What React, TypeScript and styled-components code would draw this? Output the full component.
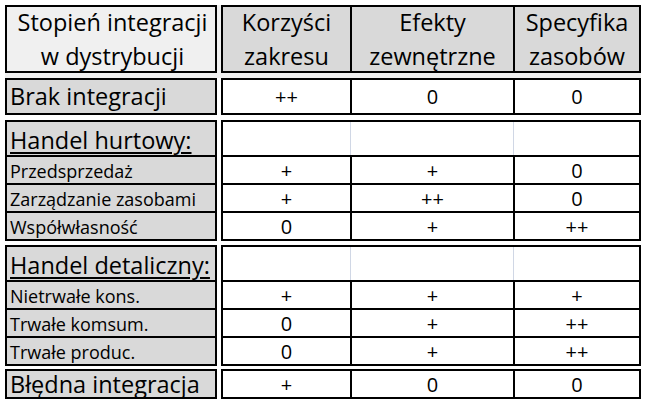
import React from "react";
import styled, { createGlobalStyle } from "styled-components";

// arkusz: stopień integracji w dystrybucji
const GlobalStyle = createGlobalStyle`
  html, body {
    margin: 0;
    background: #fff;
  }
  body {
    font-family: "Open Sans", "Noto Sans", sans-serif;
    color: #000;
  }
`;

type Size = "big" | "small" | "value";

const fontSize = (s: Size) =>
  s === "big" ? "23.5px" : s === "value" ? "20px" : "18px";

const Sheet = styled.div`
  width: 646px;
  box-sizing: border-box;
  padding-left: 5px;
  padding-top: 5px;
  display: flex;
  flex-direction: column;
`;

const Group = styled.div<{ $top?: number; $bg?: string }>`
  display: grid;
  grid-template-columns: 212px 420px;
  grid-auto-rows: min-content;
  column-gap: 4px;
  width: 636px;
  flex: none;
  margin-top: ${(p) => p.$top ?? 0}px;
  padding-bottom: ${(p) => (p.$bg ? 5 : 0)}px;
  background: ${(p) => p.$bg ?? "transparent"};
`;

const LabelCell = styled.div<{
  $h: number;
  $first?: boolean;
  $size: Size;
  $bg?: string;
  $center?: boolean;
  $bottom?: boolean;
}>`
  box-sizing: border-box;
  height: ${(p) => p.$h}px;
  overflow: hidden;
  border: 2px solid #000;
  border-top-width: ${(p) => (p.$first ? 2 : 0)}px;
  background: ${(p) => p.$bg ?? "#d9d9d9"};
  font-size: ${(p) => fontSize(p.$size)};
  display: flex;
  flex-direction: column;
  justify-content: ${(p) => (p.$bottom ? "flex-end" : "center")};
  align-items: ${(p) => (p.$center ? "center" : "flex-start")};
  text-align: ${(p) => (p.$center ? "center" : "left")};
  padding: ${(p) =>
    p.$bottom ? "0 0 1px 3px" : p.$size === "small" ? "3px 0 0 3px" : "0 0 0 3px"};
  line-height: ${(p) => (p.$center ? "34px" : "1.2")};
  white-space: nowrap;
`;

const Underlined = styled.span`
  text-decoration: underline;
  text-decoration-thickness: 2px;
  text-underline-offset: 3px;
`;

const ValueBlock = styled.div<{ $h: number; $first?: boolean }>`
  box-sizing: border-box;
  height: ${(p) => p.$h}px;
  overflow: hidden;
  border: 2px solid #000;
  border-top-width: ${(p) => (p.$first ? 2 : 0)}px;
  display: grid;
  grid-template-columns: 127px 163px 126px;
  grid-template-rows: 100%;
  background: #fff;
`;

const ValueCell = styled.div<{
  $line?: "none" | "solid" | "faint";
  $bg?: string;
  $size: Size;
}>`
  box-sizing: border-box;
  min-height: 0;
  border-left: ${(p) =>
    p.$line === "solid"
      ? "2px solid #000"
      : p.$line === "faint"
      ? "1px solid #d0d7e5"
      : "none"};
  background: ${(p) => p.$bg ?? "transparent"};
  font-size: ${(p) => fontSize(p.$size)};
  line-height: ${(p) => (p.$size === "big" ? "34px" : "1.2")};
  padding-top: ${(p) => (p.$size === "big" ? 0 : 1)}px;
  display: flex;
  flex-direction: column;
  align-items: center;
  justify-content: center;
  text-align: center;
  white-space: nowrap;
`;

interface Row {
  label: string;
  size: Size;
  values?: [string, string, string];
  underline?: boolean;
}

interface Section {
  top: number;
  rows: Row[];
}

const sections: Section[] = [
  { top: 0, rows: [{ label: "Brak integracji", size: "big", values: ["++", "0", "0"] }] },
  {
    top: 5,
    rows: [
      { label: "Handel hurtowy:", size: "big", underline: true },
      { label: "Przedsprzedaż", size: "small", values: ["+", "+", "0"] },
      { label: "Zarządzanie zasobami", size: "small", values: ["+", "++", "0"] },
      { label: "Współwłasność", size: "small", values: ["0", "+", "++"] },
    ],
  },
  {
    top: 4,
    rows: [
      { label: "Handel detaliczny:", size: "big", underline: true },
      { label: "Nietrwałe kons.", size: "small", values: ["+", "+", "+"] },
      { label: "Trwałe komsum.", size: "small", values: ["0", "+", "++"] },
      { label: "Trwałe produc.", size: "small", values: ["0", "+", "++"] },
    ],
  },
  { top: 3, rows: [{ label: "Błędna integracja", size: "big", values: ["+", "0", "0"] }] },
];

const rowHeight = (row: Row, first: boolean, single: boolean) => {
  if (single) return row.label.startsWith("Brak") ? 37 : 30;
  return first ? 37 : 28;
};

const headers: [string, string][] = [
  ["Korzyści", "zakresu"],
  ["Efekty", "zewnętrzne"],
  ["Specyfika", "zasobów"],
];

export default function App() {
  return (
    <>
      <GlobalStyle />
      <Sheet>
        <Group $bg="#f0f0f0">
          <LabelCell $h={68} $first $size="big" $bg="#f0f0f0" $center>
            <span>Stopień integracji</span>
            <span>w dystrybucji</span>
          </LabelCell>
          <ValueBlock $h={68} $first>
            {headers.map(([a, b], i) => (
              <ValueCell key={a} $line={i ? "solid" : "none"} $bg="#d9d9d9" $size="big">
                <span>{a}</span>
                <span>{b}</span>
              </ValueCell>
            ))}
          </ValueBlock>
        </Group>

        {sections.map((sec, si) => (
          <Group key={si} $top={sec.top}>
            {sec.rows.map((row, ri) => {
              const first = ri === 0;
              const h = rowHeight(row, first, sec.rows.length === 1);
              return (
                <React.Fragment key={row.label}>
                  <LabelCell $h={h} $first={first} $size={row.size} $bottom={row.underline}>
                    {row.underline ? <Underlined>{row.label}</Underlined> : row.label}
                  </LabelCell>
                  <ValueBlock $h={h} $first={first}>
                    {[0, 1, 2].map((ci) => (
                      <ValueCell
                        key={ci}
                        $size="value"
                        $line={ci === 0 ? "none" : row.values ? "solid" : "faint"}
                      >
                        {row.values ? row.values[ci] : ""}
                      </ValueCell>
                    ))}
                  </ValueBlock>
                </React.Fragment>
              );
            })}
          </Group>
        ))}
      </Sheet>
    </>
  );
}
